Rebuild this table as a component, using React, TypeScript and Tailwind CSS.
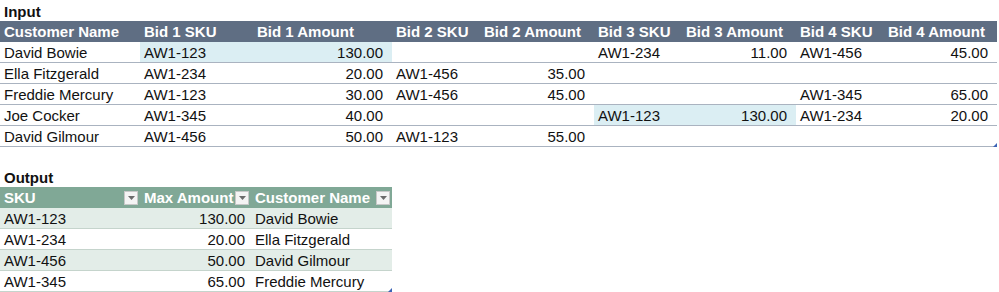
import React from "react"

const inputHeaders = [
  "Customer Name",
  "Bid 1 SKU",
  "Bid 1 Amount",
  "Bid 2 SKU",
  "Bid 2 Amount",
  "Bid 3 SKU",
  "Bid 3 Amount",
  "Bid 4 SKU",
  "Bid 4 Amount",
]

// name, then [sku, amount] x4
const inputRows: string[][] = [
  ["David Bowie", "AW1-123", "130.00", "", "", "AW1-234", "11.00", "AW1-456", "45.00"],
  ["Ella Fitzgerald", "AW1-234", "20.00", "AW1-456", "35.00", "", "", "", ""],
  ["Freddie Mercury", "AW1-123", "30.00", "AW1-456", "45.00", "", "", "AW1-345", "65.00"],
  ["Joe Cocker", "AW1-345", "40.00", "", "", "AW1-123", "130.00", "AW1-234", "20.00"],
  ["David Gilmour", "AW1-456", "50.00", "AW1-123", "55.00", "", "", "", ""],
]

// which (row, col) cells get the light blue fill
const highlighted = new Set(["0-1", "0-2", "3-5", "3-6"])

const outputRows = [
  ["AW1-123", "130.00", "David Bowie"],
  ["AW1-234", "20.00", "Ella Fitzgerald"],
  ["AW1-456", "50.00", "David Gilmour"],
  ["AW1-345", "65.00", "Freddie Mercury"],
]

const font = { fontFamily: '"Liberation Sans", Arial, sans-serif' }

function FilterButton() {
  return (
    <span className="flex h-[14px] w-[14px] shrink-0 items-center justify-center border border-[#c8c8c8] bg-[#f4f4f4]">
      <svg width="7" height="4" viewBox="0 0 7 4">
        <path d="M0 0h7L3.5 4z" fill="#6b6b6b" />
      </svg>
    </span>
  )
}

function ResizeHandle() {
  return (
    <svg className="absolute bottom-0 right-0" width="4" height="4" viewBox="0 0 4 4">
      <path d="M4 0v4H0z" fill="#3b63b5" />
    </svg>
  )
}

export default function App() {
  return (
    <div className="h-[292px] w-[999px] overflow-hidden bg-white text-[15px] text-[#111]" style={font}>
      <div className="flex h-[21px] items-center pl-1 pt-[3px] font-bold">Input</div>

      <div className="relative w-[997px]">
        <div className="grid grid-cols-[140px_113px_139px_88px_114px_88px_114px_88px_113px]">
          {inputHeaders.map((h) => (
            <div key={h} className="flex h-[21px] items-center bg-[#5f6e83] pl-1 pt-px font-bold text-white">
              {h}
            </div>
          ))}
          {inputRows.map((row, r) =>
            row.map((v, c) => {
              const num = c > 0 && c % 2 === 0
              const hl = highlighted.has(`${r}-${c}`)
              return (
                <div
                  key={`${r}-${c}`}
                  className={`flex h-[21px] items-center border-b border-[#aab3c0] pt-[2px] ${
                    num ? "justify-end pr-[9px]" : "pl-1"
                  } ${hl ? "bg-[#dbeef3]" : "bg-white"}`}
                >
                  {v}
                </div>
              )
            })
          )}
        </div>
        <ResizeHandle />
      </div>

      <div className="mt-[19px] flex h-[21px] items-center pl-1 pt-[3px] font-bold">Output</div>

      <div className="relative w-[392px]">
        <div className="grid grid-cols-[140px_111px_141px]">
          {["SKU", "Max Amount", "Customer Name"].map((h) => (
            <div key={h} className="flex h-[21px] items-center justify-between bg-[#80a896] pl-1 pr-[2px] pt-px font-bold text-white">
              <span>{h}</span>
              <FilterButton />
            </div>
          ))}
          {outputRows.map((row, r) =>
            row.map((v, c) => (
              <div
                key={`${r}-${c}`}
                className={`flex h-[21px] items-center border-b border-[#c5d4cc] pt-[2px] ${
                  c === 1 ? "justify-end pr-[6px]" : "pl-1"
                } ${r % 2 === 0 ? "bg-[#e3ede8]" : "bg-white"}`}
              >
                {v}
              </div>
            ))
          )}
        </div>
        <ResizeHandle />
      </div>
    </div>
  )
}
